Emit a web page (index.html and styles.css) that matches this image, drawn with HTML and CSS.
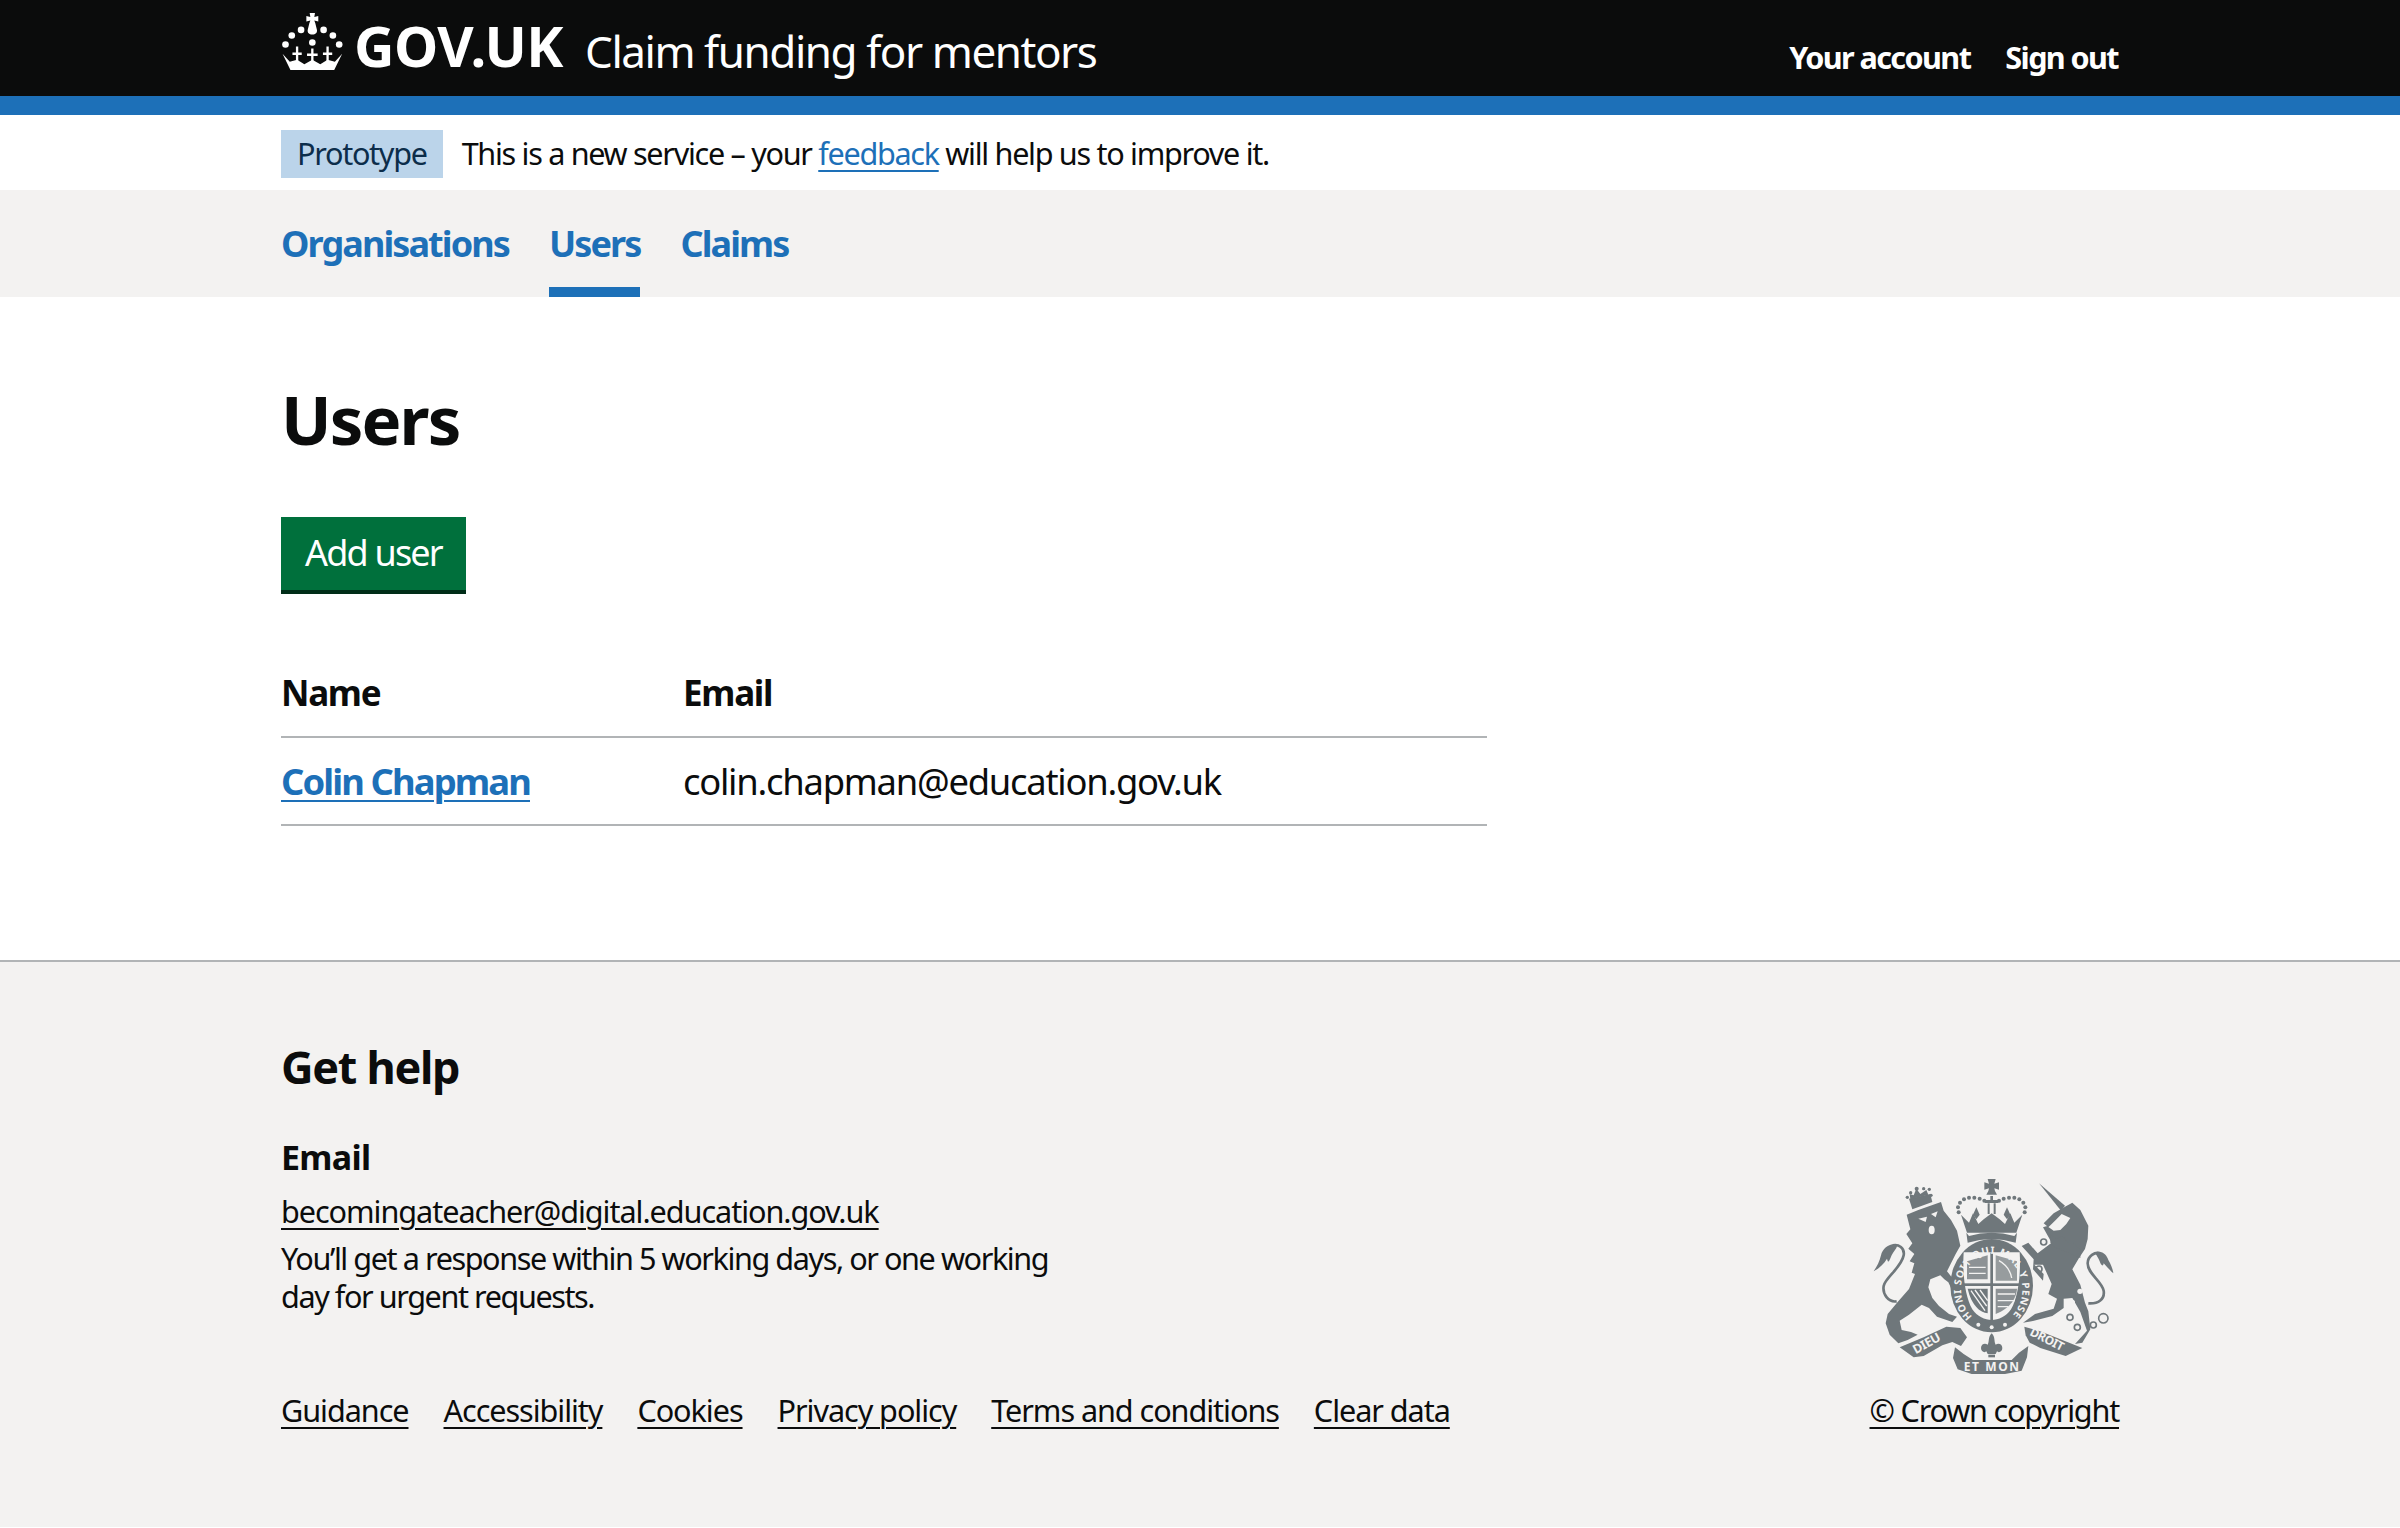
FILE: index.html
```html
<!DOCTYPE html>
<html lang="en">
<head>
    <meta charset="UTF-8">
    <meta name="viewport" content="width=device-width, initial-scale=1.0">
    <title>Users - Claim funding for mentors</title>
    <link rel="stylesheet" href="styles.css">
</head>
<body>

<header class="site-header">
    <div class="container header-row">
        <div class="header-brand">
            <svg class="crown" viewBox="30 27 186 172" aria-hidden="true">
                <g fill="#fff">
                    <circle cx="43" cy="122" r="10"/><circle cx="62" cy="95" r="10"/><circle cx="90" cy="78" r="10"/>
                    <circle cx="158" cy="78" r="10"/><circle cx="186" cy="95" r="10"/><circle cx="205" cy="122" r="10"/>
                    <circle cx="124" cy="116" r="10"/>
                    <path d="M116 27h16l-2 12 12-3v17l-12-3 3 8 5 20c1 8-4 14-14 14s-15-6-14-14l5-20 3-8-12 3V36l12 3z"/>
                    <path d="M34 150L58 199H190L214 150L192 174L170 168L148 182L124 168L100 182L78 168L56 174Z"/>
                </g>
                <g stroke="#fff" stroke-width="7" fill="none">
                    <path d="M78 128V174M64 150H92"/>
                    <path d="M124 134V174M108 153H140"/>
                    <path d="M170 128V174M156 150H184"/>
                </g>
            </svg>
            <span class="logotype">GOV.UK</span>
            <span class="service-name">Claim funding for mentors</span>
        </div>
        <nav class="account-nav">
            <a href="#">Your account</a>
            <a href="#">Sign out</a>
        </nav>
    </div>
</header>

<div class="container phase-banner">
    <strong class="phase-tag">Prototype</strong>
    <span>This is a new service – your <a href="#" class="link">feedback</a> will help us to improve it.</span>
</div>

<nav class="primary-nav">
    <ul class="container primary-nav-list">
        <li><a href="#">Organisations</a></li>
        <li class="is-current"><a href="#">Users</a></li>
        <li><a href="#">Claims</a></li>
    </ul>
</nav>

<main class="container main">
    <h1>Users</h1>
    <a href="#" class="button">Add user</a>
    <table class="table">
        <thead>
            <tr>
                <th class="col-name">Name</th>
                <th>Email</th>
            </tr>
        </thead>
        <tbody>
            <tr>
                <td><a href="#" class="link name-link">Colin Chapman</a></td>
                <td>colin.chapman@education.gov.uk</td>
            </tr>
        </tbody>
    </table>
</main>

<footer class="footer">
    <div class="container">
        <h2>Get help</h2>
        <h3>Email</h3>
        <p class="footer-email"><a href="#">becomingateacher@digital.education.gov.uk</a></p>
        <p class="footer-note">You’ll get a response within 5 working days, or one working day for urgent requests.</p>
        <div class="footer-bottom">
            <ul class="footer-links">
                <li><a href="#">Guidance</a></li>
                <li><a href="#">Accessibility</a></li>
                <li><a href="#">Cookies</a></li>
                <li><a href="#">Privacy policy</a></li>
                <li><a href="#">Terms and conditions</a></li>
                <li><a href="#">Clear data</a></li>
            </ul>
            <a href="#" class="copyright">© Crown copyright</a>
        </div>
    </div>
    <svg class="crest" viewBox="0 0 750 630" aria-hidden="true">
        <defs>
            <path id="garter" d="M322 428A92 106 0 1 1 438 428"/>
        </defs>
        <g fill="#6f777b">
            <!-- lion -->
            <path d="M125 122L160 108L228 84L236 110L258 138L276 170L286 215L272 240L258 268L246 292L262 312L278 345L262 350L250 325L238 316L226 304L196 316L190 340L202 372L222 396L252 420L276 428L262 444L216 428L192 402L170 392L132 422L104 440L110 468L138 474L158 482L128 498L100 508L74 482L62 448L68 420L98 384L132 345L150 300L140 296L148 268L134 262L148 240L130 224L142 208L124 180L136 166Z"/>
            <!-- lion crown -->
            <path d="M132 74L196 60L202 84L142 106Z"/>
            <path d="M136 76L134 60L146 64L154 44L166 60L184 48L190 62Z"/>
            <circle cx="127" cy="70" r="5"/><circle cx="137" cy="56" r="5"/><circle cx="155" cy="44" r="6"/><circle cx="176" cy="44" r="5"/><circle cx="193" cy="46" r="5"/><circle cx="198" cy="64" r="5"/>
            <!-- lion tail -->
            <path d="M95 382C70 386 52 360 56 336C60 312 110 280 116 244C120 222 100 210 84 214" fill="none" stroke="#6f777b" stroke-width="8"/>
            <path d="M92 210C72 208 52 224 48 244C44 262 36 278 26 292C44 282 58 268 66 254C70 270 72 262 78 248C84 234 94 226 96 216Z"/>
            <!-- garter -->
            <ellipse cx="380" cy="335" rx="124" ry="140"/>
            <!-- royal crown -->
            <circle cx="281" cy="115" r="6"/><circle cx="279" cy="100" r="6"/><circle cx="285" cy="86" r="6"/><circle cx="297" cy="76" r="6"/><circle cx="312" cy="71" r="6"/><circle cx="328" cy="71" r="6"/><circle cx="344" cy="74" r="6"/><circle cx="358" cy="80" r="6"/>
            <circle cx="402" cy="80" r="6"/><circle cx="416" cy="74" r="6"/><circle cx="432" cy="71" r="6"/><circle cx="448" cy="71" r="6"/><circle cx="463" cy="76" r="6"/><circle cx="475" cy="86" r="6"/><circle cx="481" cy="100" r="6"/><circle cx="479" cy="115" r="6"/>
            <path d="M288 122L306 176H454L472 122L448 146L436 118L420 150L404 136L380 118L356 136L340 150L324 118L312 146Z"/>
            <path d="M334 100L344 122L334 136L324 122Z"/>
            <path d="M426 100L436 122L426 136L416 122Z"/>
            <path d="M360 78h40v9h-40zM368 88h6v32h-6zM386 88h6v32h-6zM376 66h8v14h-8z"/>
            <path d="M368 15h24l-4 14 14-4v22l-14-4 2 8 6 11h-32l6-11 2-8-14 4V25l14 4z"/>
            <path d="M312 186Q380 166 448 186L456 176L452 206Q380 184 308 206L304 176Z" />
            <!-- unicorn -->
            <path d="M522 28L600 95L588 110Z"/>
            <path d="M600 98L622 86L646 108L670 155L668 195L660 225L642 252L622 286L646 332L660 386L670 412L676 466L652 506L630 510L666 470L646 414L622 372L596 374L596 402L562 426L500 442L474 446L510 420L566 404L576 374L550 360L560 330L534 272L508 272L536 300L534 320L504 286L506 256L470 216L490 206L518 238L560 206L534 160L546 156L566 170L586 168L604 150L616 132L590 120L570 140L550 160L536 148L566 118Z"/>
            <path d="M556 182L576 194L592 186L610 206L626 206L646 228L646 252L610 236L570 220L556 206Z"/>
            <!-- unicorn tail -->
            <path d="M670 388C700 390 720 376 716 350C710 320 668 300 668 268C668 246 690 232 706 238" fill="none" stroke="#6f777b" stroke-width="8"/>
            <path d="M694 234C716 230 726 246 730 258C738 272 744 286 745 298C734 288 724 278 716 268C714 280 708 274 704 262C700 252 696 246 692 240Z"/>
            <!-- ribbon -->
            <path d="M104 520L176 490L244 458L286 462L306 490L288 516L262 504L232 514L176 546L146 550Z"/>
            <path d="M264 552L270 520L296 540L324 558L440 558L462 536L490 516L486 550L470 590L420 600L320 600L278 586Z"/>
            <path d="M478 458L526 472L652 522L602 546L526 522L494 506L482 484Z"/>
            <!-- fleur -->
            <path d="M380 478C392 490 386 502 392 512C400 506 412 510 412 522C412 532 402 538 396 532L392 540H368L364 532C358 538 348 532 348 522C348 510 360 506 368 512C374 502 368 490 380 478Z"/>
            <rect x="370" y="542" width="20" height="8"/>
        </g>
        <g fill="none" stroke="#6f777b" stroke-width="5">
            <!-- unicorn chain -->
            <circle cx="615" cy="430" r="9"/><circle cx="637" cy="460" r="9"/><circle cx="685" cy="453" r="9"/><circle cx="715" cy="433" r="14"/>
            <circle cx="536" cy="204" r="9"/><circle cx="522" cy="285" r="9"/>
        </g>
        <g fill="#f3f2f1">
            <path d="M296 235H464C468 300 460 368 438 406C424 428 400 438 380 438C360 438 336 428 322 406C300 368 292 300 296 235Z"/>
            <circle cx="340" cy="452" r="6"/><circle cx="380" cy="460" r="6"/><circle cx="420" cy="452" r="6"/>
            <circle cx="653" cy="308" r="10"/><circle cx="645" cy="352" r="8"/><circle cx="622" cy="385" r="8"/>
            <path d="M160 134l26-6-4 16zM198 120l20-8-6 18z"/>
            <ellipse cx="200" cy="168" rx="9" ry="13"/>
        </g>
        <g fill="#6f777b">
            <rect x="376" y="236" width="8" height="205"/>
            <rect x="296" y="328" width="168" height="8"/>
            <path d="M306 262L368 244V316H306Z" opacity="0.78"/>
            <path d="M392 244L456 262V320H392Z" opacity="0.7"/>
            <path d="M392 344H456C454 370 440 400 392 420Z" opacity="0.78"/>
            <path d="M308 344H368V418C345 415 320 395 308 344Z"/>
        </g>
        <g fill="none" stroke="#f3f2f1" stroke-width="4">
            <path d="M318 350L360 410M330 348L365 396M345 348L368 380"/>
            <path d="M312 280H362M312 298H362M398 360H450M398 380H450M398 398H430"/>
            <path d="M402 260C420 270 436 290 440 312"/>
        </g>
        <g class="crest-text">
            <text font-size="30"><textPath href="#garter" textLength="485" lengthAdjust="spacing">HONI SOIT QUI MAL Y PENSE</textPath></text>
            <text font-size="38" transform="translate(152 541) rotate(-29)">DIEU</text>
            <text font-size="36" x="296" y="592" textLength="165" lengthAdjust="spacing">ET MON</text>
            <text font-size="36" transform="translate(492 482) rotate(27)">DROIT</text>
        </g>
    </svg>
</footer>

</body>
</html>
```

FILE: styles.css
```css
body {
    margin: 0;
    font-family: "Noto Sans", Arial, sans-serif;
    font-size: 36.4px;
    line-height: 48px;
    color: #0b0c0c;
    background: #fff;
}
a {
    color: inherit;
}
ul {
    list-style: none;
    margin: 0;
    padding: 0;
}
.container {
    width: 1838px;
    margin-left: auto;
    margin-right: auto;
    box-sizing: border-box;
}
.link {
    color: #1d70b8;
    text-underline-offset: 5px;
    text-decoration-thickness: 2px;
}

/* Header */
.site-header {
    height: 96px;
    background: #0b0c0c;
    border-bottom: 19px solid #1d70b8;
    color: #fff;
}
.header-row {
    display: flex;
    justify-content: space-between;
    height: 96px;
}
.header-brand {
    display: flex;
    align-items: baseline;
    white-space: nowrap;
}
.crown {
    width: 62px;
    height: 57px;
    align-self: flex-start;
    margin-top: 13px;
    margin-right: 11px;
}
.logotype {
    font-size: 56px;
    line-height: 92px;
    font-weight: 700;
    letter-spacing: -0.5px;
    margin-right: 22px;
    position: relative;
    top: -1px;
}
.service-name {
    font-size: 44px;
    line-height: 92px;
    letter-spacing: -1.45px;
}
.account-nav {
    display: flex;
    gap: 35px;
    margin-right: 1px;
    font-size: 30.6px;
    line-height: 96px;
    font-weight: 700;
    letter-spacing: -1.6px;
    padding-top: 9px;
    height: 87px;
}
.account-nav a {
    text-decoration: none;
}

/* Phase banner */
.phase-banner {
    display: flex;
    align-items: flex-start;
    gap: 19px;
    height: 75px;
    padding-top: 15px;
    font-size: 30.6px;
    letter-spacing: -1.3px;
}
.phase-banner span {
    line-height: 46px;
}
.phase-tag {
    font-weight: 400;
    color: #0c2d4a;
    background: #bbd4ea;
    height: 48px;
    line-height: 46px;
    padding: 0 16px;
}

/* Primary navigation */
.primary-nav {
    background: #f3f2f1;
}
.primary-nav-list {
    display: flex;
    gap: 40px;
    height: 107px;
}
.primary-nav-list li {
    box-sizing: border-box;
    height: 107px;
    padding-top: 30px;
    font-size: 36px;
    font-weight: 700;
    letter-spacing: -1.9px;
}
.primary-nav-list a {
    color: #1d70b8;
    text-decoration: none;
}
.primary-nav-list .is-current {
    border-bottom: 10px solid #1d70b8;
}

/* Main */
.main {
    padding-top: 77px;
    padding-bottom: 134px;
}
h1 {
    margin: 0 0 53px;
    font-size: 67px;
    line-height: 90px;
    font-weight: 700;
    letter-spacing: -1.9px;
}
.button {
    display: block;
    box-sizing: border-box;
    width: 185px;
    height: 77px;
    line-height: 72px;
    text-align: center;
    color: #fff;
    background: #00703c;
    border-bottom: 4px solid #002d18;
    text-decoration: none;
    font-size: 36px;
    letter-spacing: -1.8px;
}
.table {
    width: 1206px;
    margin-top: 54px;
    border-collapse: collapse;
}
.table th,
.table td {
    text-align: left;
    padding: 0;
    border-bottom: 2px solid #b1b4b6;
}
.table th {
    height: 89px;
    padding-top: 2px;
    box-sizing: border-box;
    font-size: 35px;
    font-weight: 700;
    letter-spacing: -1.3px;
}
.table td {
    height: 86px;
    letter-spacing: -1.25px;
}
.col-name {
    width: 402px;
}
.name-link {
    font-weight: 700;
    letter-spacing: -1.9px;
}

/* Footer */
.footer {
    position: relative;
    height: 567px;
    box-sizing: border-box;
    background: #f3f2f1;
    border-top: 2px solid #b1b4b6;
    padding-top: 74px;
    font-size: 30.6px;
    line-height: 38px;
    letter-spacing: -1.05px;
}
.footer a {
    text-underline-offset: 5px;
    text-decoration-thickness: 2px;
}
.footer h2 {
    margin: 0 0 35px;
    font-size: 45px;
    line-height: 62px;
    font-weight: 700;
    letter-spacing: -1.3px;
}
.footer h3 {
    margin: 0 0 11px;
    font-size: 34px;
    line-height: 48px;
    font-weight: 700;
    letter-spacing: -0.7px;
}
.footer p {
    margin: 0;
}
.footer-email {
    margin-bottom: 9px !important;
}
.footer-note {
    width: 800px;
    letter-spacing: -1.42px;
}
.footer-bottom {
    display: flex;
    justify-content: space-between;
    margin-top: 76px;
}
.footer-links {
    display: flex;
    gap: 35px;
}
.copyright {
    letter-spacing: -1.2px;
}
.crest {
    position: absolute;
    left: 1865px;
    top: 212px;
    width: 250px;
    height: 210px;
}
.crest-text {
    font-family: "Noto Sans", Arial, sans-serif;
    font-weight: 700;
}
.crest-text text {
    fill: #f3f2f1;
}
```
